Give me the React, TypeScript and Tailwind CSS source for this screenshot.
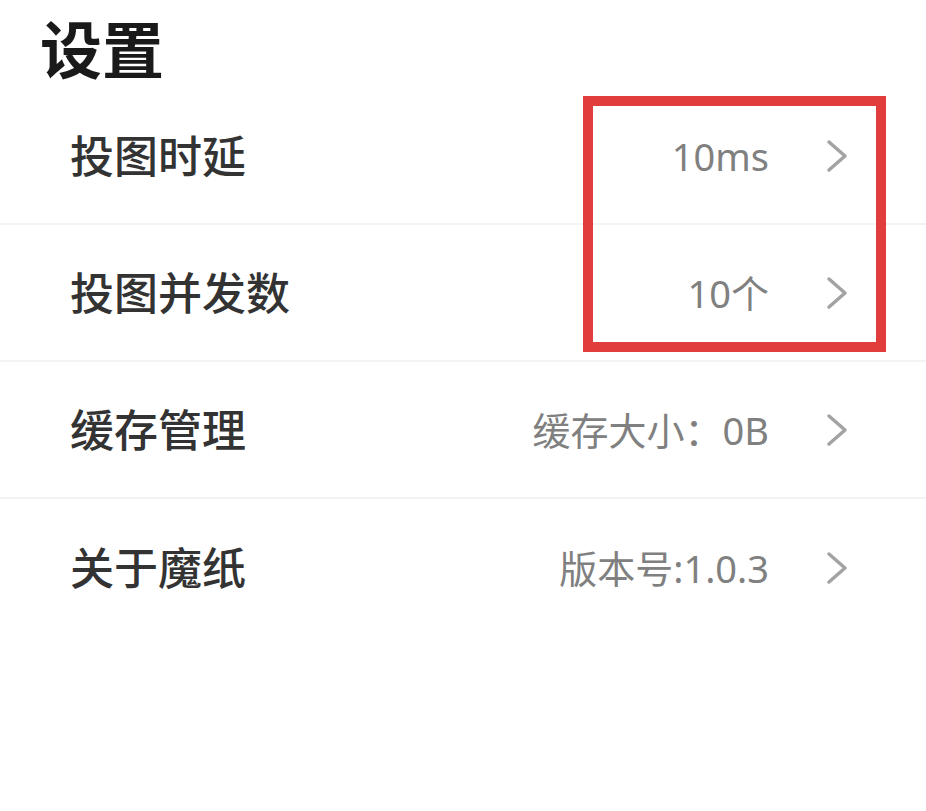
import React from 'react';

const rows = [
  { label: '投图时延', value: '10ms' },
  { label: '投图并发数', value: '10个' },
  { label: '缓存管理', value: '缓存大小：0B' },
  { label: '关于魔纸', value: '版本号:1.0.3' },
];

function Chevron() {
  return (
    <svg width="24" height="34" viewBox="0 0 24 34" className="shrink-0">
      <polyline points="4,3 20,17 4,31" fill="none" stroke="#a3a3a3" strokeWidth="3.5" strokeLinecap="round" strokeLinejoin="round" />
    </svg>
  );
}

function SettingRow({ label, value }: { label: string; value: string }) {
  return (
    <div className="flex items-center h-[137px] pl-[70px] pr-[77px] border-b-2 border-[#f3f3f3] last:border-b-0">
      <span className="flex-1 text-[44px] font-medium text-[#333333] leading-none">{label}</span>
      <span className="text-[38px] text-[#808080] leading-none mr-[56px]">{value}</span>
      <Chevron />
    </div>
  );
}

export default function App() {
  return (
    <div
      className="relative w-[926px] h-[811px] bg-white overflow-hidden"
      style={{ fontFamily: '"Noto Sans", "Noto Sans CJK SC", sans-serif' }}
    >
      <h1 className="pl-[40px] pt-[12px] text-[62px] font-bold text-[#1a1a1a] leading-[76px]">设置</h1>
      <div className="flex flex-col">
        {rows.map((r) => (
          <SettingRow key={r.label} label={r.label} value={r.value} />
        ))}
      </div>

      {/* red highlight box */}
      <div className="absolute left-[583px] top-[96px] w-[303px] h-[256px] border-[10px] border-[#e23d3d]" />
    </div>
  );
}
